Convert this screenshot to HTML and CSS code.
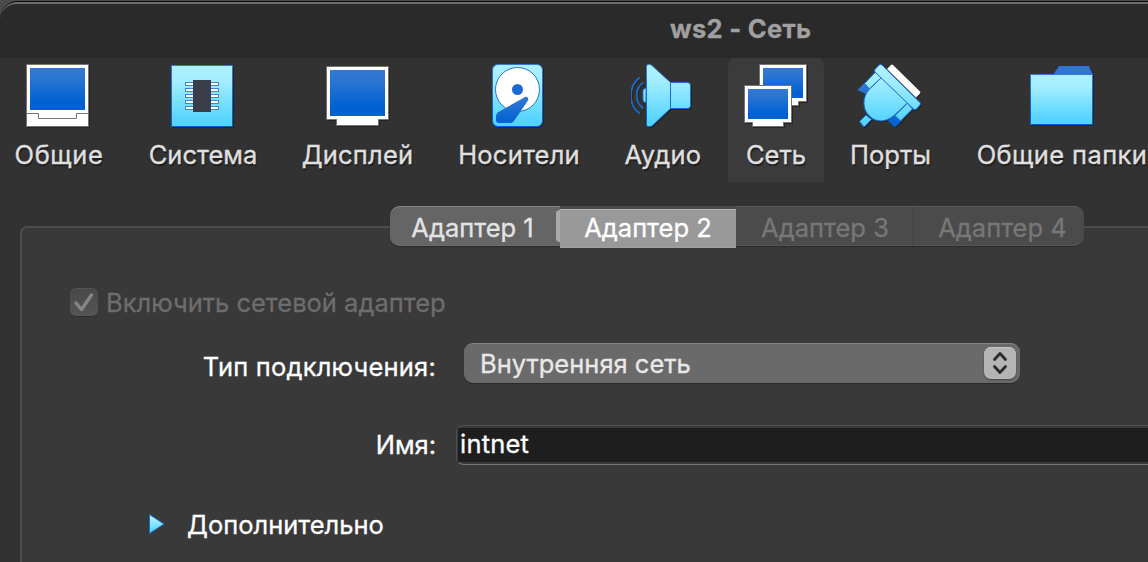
FILE: index.html
```html
<!DOCTYPE html>
<html lang="ru">
<head>
<meta charset="utf-8">
<title>ws2 - Сеть</title>
<link rel="stylesheet" href="styles.css">
</head>
<body>
<svg class="defs" width="0" height="0" aria-hidden="true">
  <defs>
    <linearGradient id="screen" x1="0" y1="0" x2="0" y2="1"><stop offset="0" stop-color="#3478d0"/><stop offset=".25" stop-color="#2a75d2"/><stop offset=".8" stop-color="#0062d2"/><stop offset="1" stop-color="#0062d2"/></linearGradient>
    <linearGradient id="sky" x1="0" y1="0" x2="0" y2="1"><stop offset="0" stop-color="#acf0ff"/><stop offset=".25" stop-color="#a4eeff"/><stop offset=".9" stop-color="#54d4ff"/><stop offset="1" stop-color="#52d2ff"/></linearGradient>
    <linearGradient id="sky-full" gradientUnits="userSpaceOnUse" x1="0" y1="0" x2="0" y2="64"><stop offset="0" stop-color="#b0f1ff"/><stop offset=".25" stop-color="#a4eeff"/><stop offset=".9" stop-color="#54d4ff"/><stop offset="1" stop-color="#52d2ff"/></linearGradient>
    <linearGradient id="edge" x1="0" y1="0" x2="0" y2="1"><stop offset="0" stop-color="#3478d0"/><stop offset="1" stop-color="#0062d2"/></linearGradient>
  </defs>
</svg>
<div class="window">
  <header class="titlebar"><h1 class="title">ws2 - Сеть</h1></header>
  <nav class="toolbar">
    <div class="tool tool-general">
      <svg class="icon" viewBox="0 0 64 64"><path fill="#fff" stroke="#747474" d="M.5.5h62v62H.5z"/><path fill="url(#screen)" d="M4 4h55v42H4z"/><path fill="none" stroke="#747474" d="M1 49.500h11.500v5h38v-5H62"/></svg>
      <span class="tool-label label-general">Общие</span>
    </div>
    <div class="tool">
      <svg class="icon" viewBox="0 0 64 64"><path fill="url(#sky)" stroke="url(#edge)" d="M1.500 1.500h61v61h-61z"/><g fill="#fff" stroke="#4384c8"><rect x="15.500" y="18.500" width="33" height="3"/><rect x="15.500" y="24.500" width="33" height="3"/><rect x="15.500" y="30.500" width="33" height="3"/><rect x="15.500" y="36.500" width="33" height="3"/><rect x="15.500" y="42.500" width="33" height="3"/></g><path fill="#383d48" d="M23 16h18v32H23z"/></svg>
      <span class="tool-label label-system">Система</span>
    </div>
    <div class="tool">
      <svg class="icon" viewBox="0 0 64 64"><path fill="#fff" stroke="#747474" d="M.5 2.500h62v53h-10v6h-42v-6H.5z"/><path fill="url(#screen)" d="M4 6h55v46H4z"/></svg>
      <span class="tool-label label-display">Дисплей</span>
    </div>
    <div class="tool">
      <svg class="icon" viewBox="0 0 64 64"><rect x="6.500" y=".5" width="50" height="62" rx="5.500" fill="url(#sky)" stroke="url(#edge)"/><circle cx="31.500" cy="25.500" r="22" fill="#fff" stroke="#2a72cc"/><circle cx="31.500" cy="25.500" r="5.500" fill="#1a6cd2"/><path fill="url(#edge)" d="M10 53c0-4 2-5 6-7l23-13c2-1 4 1 3 3.500L30 54c-2 3-3 5-6 5H13c-2 0-3-1-3-3z"/></svg>
      <span class="tool-label label-storage">Носители</span>
    </div>
    <div class="tool">
      <svg class="icon" viewBox="0 0 64 64"><g fill="none" stroke="#1d6bcb" stroke-width="1.700"><path d="M9 13.500c-12 8-12 28 0 36M12.500 18.500c-9 6-9 20 0 26"/></g><path fill="url(#sky-full)" stroke="url(#edge)" d="M15 24.500c-2 0-3 1-3 3v8c0 2 1 3 3 3z"/><path fill="url(#sky-full)" stroke="url(#edge)" d="M15.500 2.500c0-2.500 4-2.500 6-.5l18 16.500h17q3 0 3 3v20q0 3-3 3h-17l-18 17c-2 1.500-6 2-6-1z"/><path stroke="#1a6cd2" d="M39.500 18.500v26"/></svg>
      <span class="tool-label label-audio">Аудио</span>
    </div>
    <div class="tool tool-active">
      <svg class="icon" viewBox="0 0 64 64"><path fill="#fff" stroke="#747474" d="M15.500.5h47v37h-8v4h-30v-4h-9z"/><path fill="url(#screen)" d="M19 4h40v30H19z"/><path fill="#fff" stroke="#747474" d="M.5 21.500h47v37h-8v4h-31v-4h-8z"/><path fill="url(#screen)" d="M4 25h40v30H4z"/></svg>
      <span class="tool-label">Сеть</span>
    </div>
    <div class="tool">
      <svg class="icon icon-ports" viewBox="0 0 64 64"><path fill="#fff" d="M29 5l4-4q1-1 2 0l27 26.500q1 1 0 2l-4 4z"/><path fill="url(#edge)" d="M-.5 26l7-7 6 6 4 9-5-2zM30 57l7 6.500 7-7-8-7z"/><g fill="url(#sky-full)" stroke="#1a6cd2"><path d="M6.500 19.500L17.500 8l6 5.500L11.500 25zM37 51.500L49.500 39l5 6-12 12z"/><path d="M23.500 13.500L49.500 39 36 51.500c-8 7-18 7-24 1C4 46 4 33 11.500 25z"/><path d="M17 5.500l4-4.500q1.500-1 3 0l38 37.500q1 1 0 2.500l-3.500 4q-1.500 1-3 0L17 8q-1-1 0-2.500z"/><path d="M1.500 57.500l6.500-6.500 5.500 4.500-7.500 7.500z"/></g></svg>
      <span class="tool-label">Порты</span>
    </div>
    <div class="tool">
      <svg class="icon" viewBox="0 0 64 64"><path fill="#2f75d1" d="M23 11l6-9h30l4 9z"/><path fill="url(#sky)" stroke="url(#edge)" d="M.5 10.500h62v50H.5z"/></svg>
      <span class="tool-label label-folders">Общие папки</span>
    </div>
  </nav>
  <main class="content">
    <div class="tabs">
      <button class="tab tab-first">Адаптер 1</button>
      <button class="tab tab-selected">Адаптер 2</button>
      <button class="tab">Адаптер 3</button>
      <button class="tab tab-last">Адаптер 4</button>
    </div>
    <section class="panel">
      <div class="enable">
        <span class="checkbox"><svg viewBox="0 0 28 28"><path d="M6 14l5.500 6.500L21.500 6" fill="none" stroke="#858585" stroke-width="3.400" stroke-linecap="round" stroke-linejoin="round"/></svg></span>
        <span class="enable-label">Включить сетевой адаптер</span>
      </div>
      <div class="row row-type">
        <span class="field-label label-type">Тип подключения:</span>
        <div class="select"><span class="select-text">Внутренняя сеть</span><span class="stepper"><svg viewBox="0 0 32 32"><path d="M10.500 11.500L16 5.500l5.500 6M10.500 18.500l5.500 6 5.500-6" fill="none" stroke="#2b2b2b" stroke-width="2.800" stroke-linecap="round" stroke-linejoin="round"/></svg></span></div>
      </div>
      <div class="row row-name">
        <span class="field-label">Имя:</span>
        <div class="input"><span class="input-text">intnet</span></div>
      </div>
      <div class="advanced">
        <svg class="arrow" viewBox="0 0 16 20"><path d="M.5.5L15 10 .5 19.500z" fill="url(#sky)" stroke="#176bd0"/></svg>
        <span class="advanced-label">Дополнительно</span>
      </div>
    </section>
  </main>
</div>
</body>
</html>
```
FILE: styles.css
```css
* { box-sizing: border-box; }
body { margin: 0; width: 1148px; height: 562px; overflow: hidden; background: #4b4b4d; font-family: Inter, "Noto Sans", sans-serif; font-size: 25.5px; line-height: 32px; -webkit-text-stroke: .3px currentColor; }
svg { display: block; }
.defs { height: 0; }
.window { height: 561px; margin-top: 1px; width: 1180px; overflow: hidden; background: #323232; border-top: 1px solid #0a0a0a; border-radius: 18px 0 0 0; }
.titlebar { height: 56px; padding: 9px 0 0 670px; background: #2a2a2a; border-top: 2px solid #6e6e6b; border-radius: 17px 0 0 0; }
.title { margin: 0; font-size: 25.5px; line-height: 32px; letter-spacing: .3px; font-weight: 700; color: #a0a0a0; white-space: nowrap; }
.toolbar { display: grid; grid-template-columns: 115px 174px 137px 184px 118px 96px 133px 210px; height: 124px; }
.tool { display: flex; flex-direction: column; align-items: center; padding-top: 6px; white-space: nowrap; }
.tool:nth-child(5) { padding-right: 13px; }
.tool-active { background: #3b3b3b; border-radius: 8px 8px 0 0; }
.icon { width: 64px; height: 64px; filter: drop-shadow(1px 1px 0 #242424); }
.icon-ports { overflow: visible; margin-left: -1px; }
.tool-label { margin-top: 11px; color: #e0e0e0; text-shadow: 1px 2px 1px #1b1b1b; }
.label-general { margin-left: 3px; letter-spacing: .6px; }
.label-system { margin-left: 2px; }
.label-display { letter-spacing: .2px; }
.label-storage { margin-left: 2px; letter-spacing: .2px; }
.label-audio { margin-left: 1px; letter-spacing: .3px; }
.label-folders { letter-spacing: .4px; }
.content { padding: 24px 0 0 20px; }
.tabs { position: relative; display: flex; width: 694px; height: 40px; margin-left: 370px; border-radius: 10px; background: #4b4b4b; box-shadow: 0 1px 1px #2a2a2a; }
.tab { width: 176px; height: 40px; padding: 4px 0 0 2px; font: inherit; white-space: nowrap; color: #777; background: #4b4b4b; border: 0; border-top: 1px solid #5c5c5c; border-bottom: 1px solid #555; }
.tab-first { width: 170px; padding-right: 7px; color: #e4e4e4; background: #656565; border-top-color: #858585; border-bottom-color: #6c6c6c; border-radius: 10px 0 0 10px; }
.tab-selected { position: relative; height: 39px; margin-top: 3px; padding: 0 0 2px; background: #999; color: #fff; border-color: #b5b5b5; border-bottom-color: #a0a0a0; }
.tab-selected::before { content: ""; position: absolute; left: -4px; top: 0; width: 4px; height: 32px; background: #aaa; border-radius: 4px 0 0 4px; }
.tab-last { width: 172px; padding-left: 8px; border-left: 1px solid #464646; border-radius: 0 10px 10px 0; }
.panel { height: 360px; width: 1180px; margin-top: -20px; padding: 60px 0 0 48px; background: #393939; border: 2px solid #4d4d4d; border-radius: 7px 0 0 0; }
.enable { display: flex; align-items: center; height: 28px; gap: 8px; color: #6d6d6d; white-space: nowrap; }
.enable-label { padding-top: 2px; }
.checkbox { width: 28px; height: 28px; background: linear-gradient(#484848, #555); border-radius: 6px; border-top: 1px solid #555; box-shadow: 0 1px 1px #2e2e2e; }
.row { display: flex; align-items: center; height: 40px; }
.row-type { margin-top: 27px; gap: 28px; }
.row-name { margin-top: 42px; gap: 21px; }
.field-label { width: 366px; text-align: right; color: #fff; white-space: nowrap; }
.label-type { padding-top: 8px; letter-spacing: .2px; }
.select { display: flex; align-items: center; justify-content: space-between; width: 556px; height: 40px; padding: 0 4px 0 16px; background: #6a6a6a; border-top: 1px solid #858585; border-radius: 9px; box-shadow: 0 1px 1px #292929; color: #e8e8e8; }
.stepper { width: 32px; height: 32px; margin-top: -1px; border-radius: 7px; background: #b4b4b4; border-top: 1px solid #cbcbcb; box-shadow: 0 1px 2px #454545; }
.input { width: 720px; height: 40px; margin-left: -1px; padding: 2px 0 2px 1px; border: 1px solid #505050; border-bottom-color: #767676; border-radius: 8px; background: #393939; color: #fff; }
.input-text { display: block; height: 34px; padding-left: 2px; background: #1e1e1e; line-height: 32px; letter-spacing: .2px; }
.advanced { display: flex; align-items: center; height: 32px; margin: 43px 0 0 79px; gap: 22px; color: #fff; }
.advanced-label { padding-top: 2px; }
.arrow { width: 16px; height: 20px; }
```
